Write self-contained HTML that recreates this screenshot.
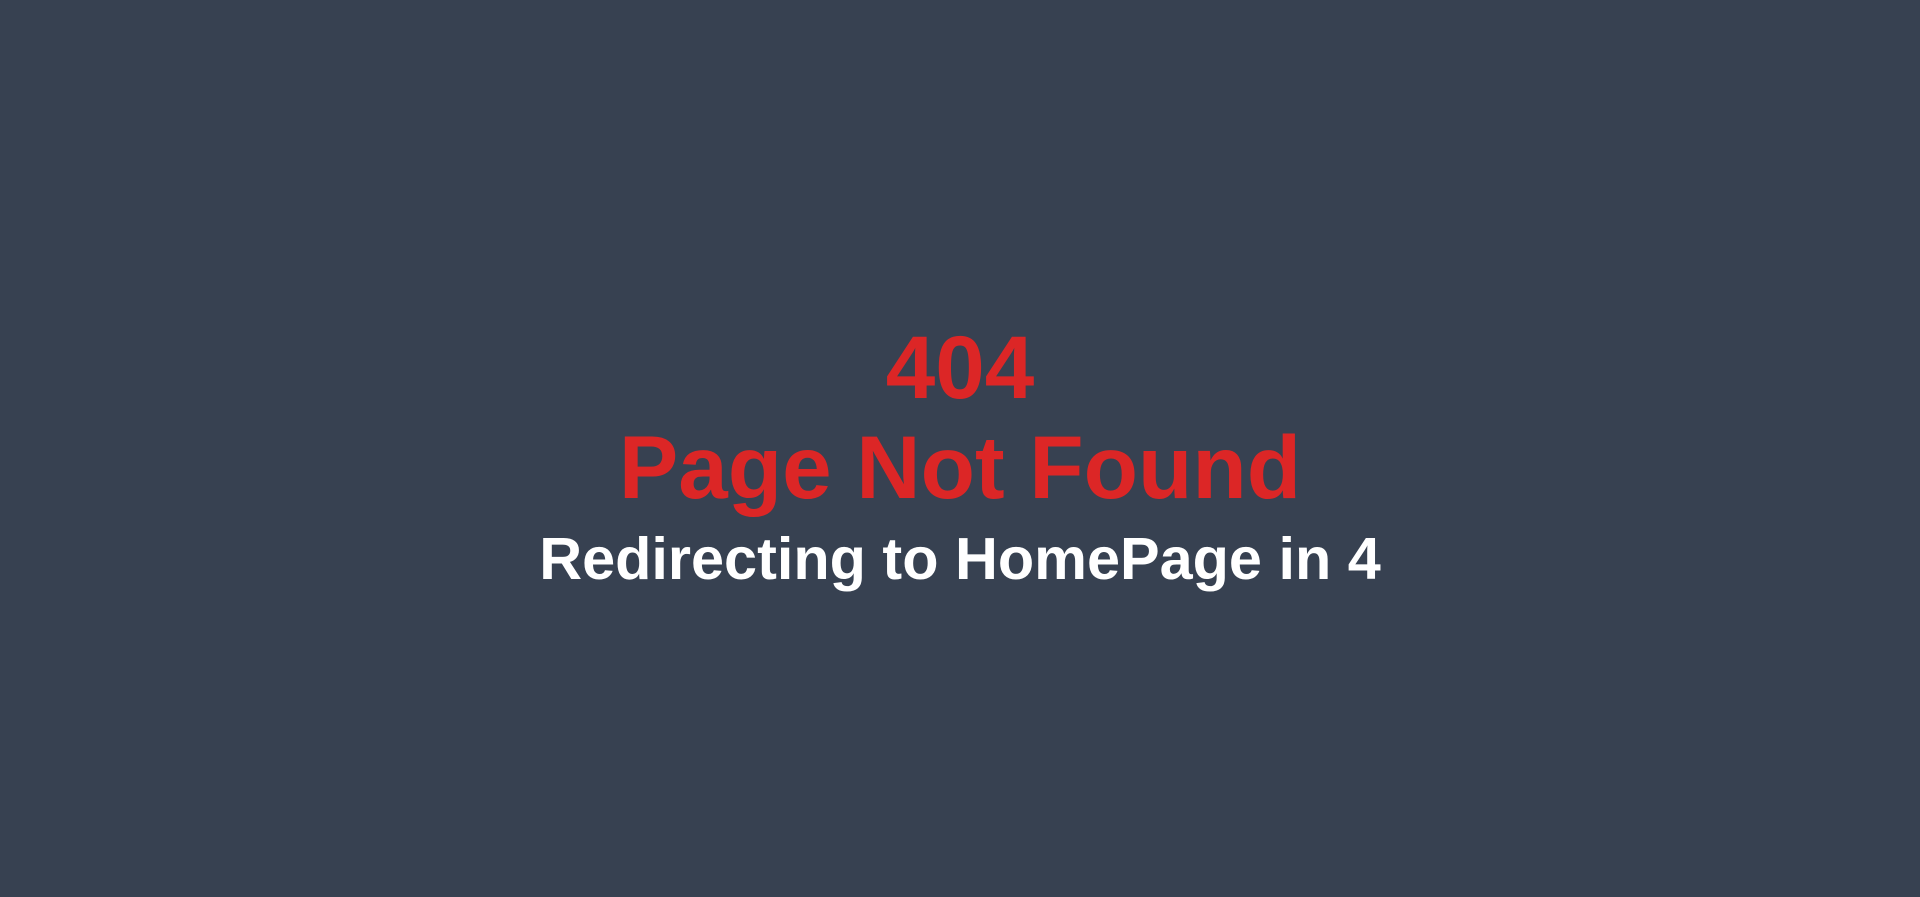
<!DOCTYPE html>
<html><head><meta charset="utf-8"><style>
html,body{margin:0;padding:0;width:1920px;height:897px;background:#374151;overflow:hidden;font-family:"Liberation Sans",sans-serif;font-weight:bold;}
.l{position:absolute;left:0;width:1920px;text-align:center;white-space:nowrap;}
.r{color:#dc2626;font-size:89px;line-height:100px;}
.w{color:#fff;font-size:59.4px;line-height:82px;}
</style></head><body>
<div class="l r" style="top:317px">404</div>
<div class="l r" style="top:417px">Page Not Found</div>
<div class="l w" style="top:518px">Redirecting to HomePage in 4</div>
</body></html>
